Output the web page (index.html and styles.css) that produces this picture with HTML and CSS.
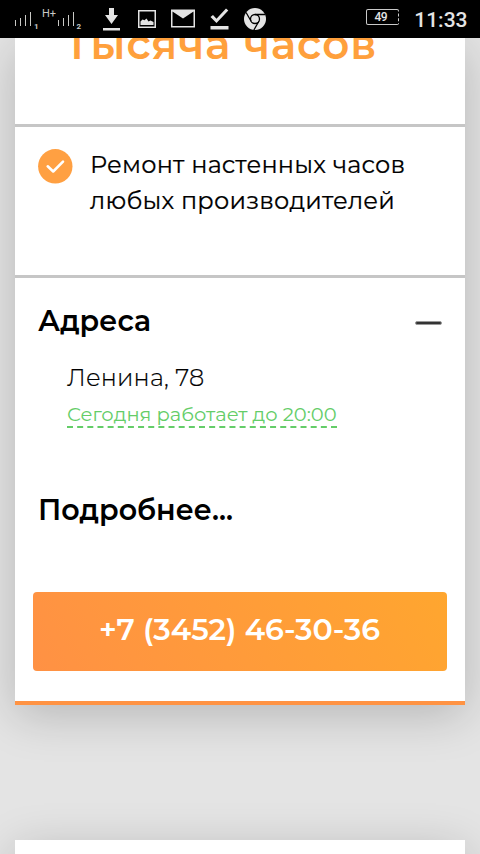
FILE: index.html
```html
<!DOCTYPE html>
<html lang="ru">
<head>
<meta charset="utf-8">
<title>Тысяча часов</title>
<link rel="stylesheet" href="styles.css">
</head>
<body>
<header class="status">
  <svg class="status-icons" width="280" height="38" viewBox="0 0 280 38">
    <g fill="#c9c9c5">
      <path d="M15 20h1v6h-1zM20 18h1v8h-1zM25 15h1v11h-1zM30 12h1v14h-1zM58 20h1v6h-1zM63 18h1v8h-1zM68 15h1v11h-1zM73 12h1v14h-1z"/>
      <text class="net" x="42" y="17">H+</text>
      <text class="sim" x="34" y="28.5">1</text>
      <text class="sim" x="76.5" y="28.5">2</text>
    </g>
    <g fill="#e4e4e4">
      <path d="M109 8h5v7h4l-6.500 9-6.500-9h4zM103 28h17v2.500h-17z"/>
      <path fill-rule="evenodd" d="M138 10h18v18h-18zM139.500 11.500v15h15v-15z"/>
      <path d="M140.500 25v-3.500l2-2 2 .8 2-1.800 2 3 2-1 3 1.500v3z"/>
      <path fill-rule="evenodd" d="M171 9.500h24v18h-24zM172.500 11.500v14.500h21v-14.500l-10.500 7z"/>
      <path d="M210.500 17l2.500-2 3.500 3.800 9.500-10.300 2.300 2-11.800 12.500zM210.500 26h18v3.500h-18z"/>
      <circle cx="255" cy="19" r="11"/>
    </g>
    <g fill="none" stroke="#000" stroke-width="1.300">
      <circle cx="255" cy="19" r="4.500"/>
      <path d="M255 14.500h10M251.100 21.200l-5-8.700M258.900 21.200l-5 8.800"/>
    </g>
  </svg>
  <div class="status-right">
    <span class="battery">49</span>
    <span class="clock">11:33</span>
  </div>
</header>
<main class="page">
  <article class="card">
    <h1 class="title">Тысяча часов</h1>
    <section class="service">
      <svg class="check" width="35" height="35" viewBox="0 0 35 35">
        <circle cx="17.300" cy="17.300" r="17.200" fill="#ffa042"/>
        <path d="M9.700 17.300l5.500 5.200 9.800-9.800" fill="none" stroke="#fff" stroke-width="2.600" stroke-linecap="round" stroke-linejoin="round"/>
      </svg>
      <p class="service-text">Ремонт настенных часов<br>любых производителей</p>
    </section>
    <section class="details">
      <div class="row">
        <h2 class="heading">Адреса</h2>
        <span class="minus"></span>
      </div>
      <div class="address">
        <p class="street">Ленина, 78</p>
        <a class="hours">Сегодня работает до 20:00</a>
      </div>
      <h2 class="heading">Подробнее...</h2>
    </section>
    <a class="phone">+7 (3452) 46-30-36</a>
  </article>
  <article class="card next"></article>
</main>
</body>
</html>
```
FILE: styles.css
```css
* { box-sizing: border-box; }
body {
  margin: 0;
  height: 854px;
  display: flex;
  flex-direction: column;
  overflow: hidden;
  background: #e4e4e4;
  color: #000;
  font-family: Montserrat, Inter, sans-serif;
}
h1, h2, p { margin: 0; }
.status {
  height: 38px;
  flex: none;
  display: flex;
  justify-content: space-between;
  background: #000;
  color: #e4e4e4;
  font-family: Roboto, sans-serif;
}
.net { font-size: 11px; }
.sim { font-size: 8px; font-weight: 700; }
.status-right { display: flex; padding-right: 12.500px; }
.battery {
  width: 33px;
  height: 16px;
  margin: 9px 15.500px 0 0;
  border: 1px solid #c9c9c9;
  border-right-style: dashed;
  border-radius: 2px;
  padding-right: 3px;
  text-align: center;
  font-size: 12px;
  font-weight: 500;
  letter-spacing: -.7px;
  line-height: 15px;
}
.clock { font-size: 21px; font-weight: 500; line-height: 40px; }
.page {
  flex: 1;
  min-height: 0;
  overflow: hidden;
  padding: 0 15px;
}
.card {
  height: 667.300px;
  background: #fff;
  border-bottom: 4px solid #ff9343;
  box-shadow: 0 10px 45px rgba(0, 0, 0, .2);
}
.title {
  height: 85.500px;
  padding-left: 49px;
  color: #ffa03c;
  font-size: 42px;
  font-weight: 600;
  line-height: 12px;
  letter-spacing: 1px;
  white-space: nowrap;
}
.service {
  display: flex;
  gap: 17.500px;
  height: 154.500px;
  padding: 20px 0 0 22.500px;
  border: solid #c6c6c6;
  border-width: 3px 0;
}
.check { margin-top: 2.500px; }
.service-text {
  font-size: 24px;
  font-weight: 400;
  line-height: 36px;
  letter-spacing: .230px;
  -webkit-text-stroke: .2px #000;
}
.details { height: 313.500px; padding: 25px 23px 0; }
.row { display: flex; justify-content: space-between; align-items: center; }
.heading { font-size: 28.500px; font-weight: 600; line-height: 36px; }
.minus {
  width: 27px;
  height: 4px;
  margin-top: 4px;
  border: 1px solid #999;
  border-radius: 2px;
  background: #333;
}
.address { height: 153px; padding: 21px 0 0 29px; }
.street { font-size: 24px; font-weight: 300; line-height: 36px; letter-spacing: .2px; -webkit-text-stroke: .2px #000; }
.hours {
  display: inline-block;
  margin-top: 7px;
  border-bottom: 2px dashed #64cd68;
  color: #64cd68;
  font-size: 19.500px;
  line-height: 23px;
}
.phone {
  display: block;
  width: 414px;
  height: 79.500px;
  margin-left: 18px;
  padding-right: 1px;
  border-radius: 4px;
  background: linear-gradient(60deg, #ff9144, #ffa62f);
  color: #fff;
  text-align: center;
  font-size: 30px;
  font-weight: 600;
  line-height: 76px;
}
.next { margin-top: 135.200px; }
```
